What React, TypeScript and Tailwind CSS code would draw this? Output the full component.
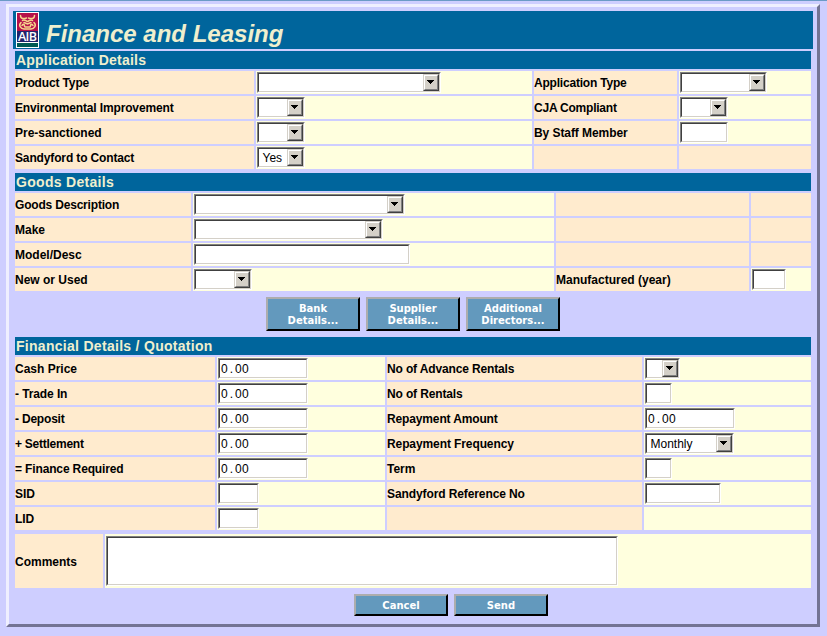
import React from "react";

const sunken =
  "box-border h-[21px] shrink-0 border border-t-[#808080] border-l-[#808080] border-r-white border-b-white bg-white";
const sunkenInner =
  "flex h-full w-full border border-t-[#404040] border-l-[#404040] border-r-[#d4d0c8] border-b-[#d4d0c8]";

function Amount({ value }: { value: string }) {
  const [whole, cents] = value.split(".");
  return (
    <span className="pl-px text-[12px] leading-[19px] tracking-[0.3px]">
      {whole}
      <span className="px-[1.7px]">.</span>
      {cents}
    </span>
  );
}

function Field({ w, value }: { w: string; value?: string }) {
  return (
    <div role="textbox" className={`${sunken} ${w}`}>
      <div className={sunkenInner}>{value && <Amount value={value} />}</div>
    </div>
  );
}

function Select({ w, value }: { w: string; value?: string }) {
  return (
    <div role="combobox" className={`${sunken} ${w}`}>
      <div className={sunkenInner}>
        <span className="min-w-0 flex-1 pl-[3.5px] text-[12px] leading-[18px]">{value}</span>
        <div className="h-[17px] w-4 shrink-0 border border-t-[#d4d0c8] border-l-[#d4d0c8] border-r-[#404040] border-b-[#404040]">
          <div className="h-full w-full border border-t-white border-l-white border-r-[#808080] border-b-[#808080] bg-[#d4d0c8] pt-1 pl-[2px]">
            <svg width="7" height="4" className="block" shapeRendering="crispEdges">
              <path d="M0 0h7v1h-1v1h-1v1h-1v1h-1v-1h-1v-1h-1v-1h-1z" fill="#000" />
            </svg>
          </div>
        </div>
      </div>
    </div>
  );
}

function Label({ children, t = "tracking-[-0.14px]" }: { children?: React.ReactNode; t?: string }) {
  return (
    <div className="flex items-center bg-[#ffebce] text-[12px] leading-[14px] font-bold whitespace-nowrap">
      <span className={t}>{children}</span>
    </div>
  );
}

function Value({ children }: { children?: React.ReactNode }) {
  return <div className="bg-[#ffffde] pt-px pl-px">{children}</div>;
}

function Bar({ children, t }: { children: string; t: string }) {
  return (
    <h2 className="h-[18px] bg-[#00659c] pl-px text-[14px] leading-[18px] font-bold whitespace-nowrap text-[#efefce]">
      <span className={t}>{children}</span>
    </h2>
  );
}

function Action({ children, h }: { children: React.ReactNode; h: string }) {
  return (
    <button
      className={`${h} w-[94px] border-2 border-t-[#adadad] border-l-[#adadad] border-r-black border-b-black bg-[#6399bd] pt-[2px] font-['DejaVu_Sans',sans-serif] text-[10px] leading-[12px] font-bold text-white`}
    >
      {children}
    </button>
  );
}

function Logo() {
  return (
    <svg width="23" height="36" viewBox="0 0 23 36" className="block shrink-0">
      <rect width="23" height="36" fill="#fff" />
      <rect x="1" y="1" width="21" height="18" fill="#b5104a" />
      <g fill="none" stroke="#f7d68c" strokeWidth="1.5" strokeLinecap="round">
        <path d="M4.500 3.500c0 3.500 3.500 3.500 6 2.500M18.500 3.500c0 3.500-3.500 3.500-6 2.500" />
        <path d="M6.500 8.500c2-2 3.500 1 5 1s3-3 5-1M8 10.500l3.500 1.500 3.500-1.500" />
        <path d="M5 10.500c-3 3 0 6.500 3 6.500h7c3 0 6-3.500 3-6.500M6 13.500c1-2 3-1 2.500 1M17 13.500c-1-2-3-1-2.500 1M9 15h5" />
      </g>
      <rect x="1" y="19" width="21" height="11" fill="#21246b" />
      <text x="11.500" y="28.700" textAnchor="middle" textLength="19" fontFamily="Open Sans" fontWeight="600" fontSize="12.500" fill="#fff">
        AIB
      </text>
      <rect x="1" y="31" width="21" height="4" fill="#005a52" />
    </svg>
  );
}

export default function App() {
  return (
    <div className="h-[636px] w-[827px] border-t border-[#6b9ac6] bg-[#ceceff] pt-[3px] pl-[6px] font-['Liberation_Sans',Arial,sans-serif] text-black">
      <div className="h-[623px] w-[814px] border-[3px] border-t-[#efefff] border-l-[#efefff] border-r-[#737394] border-b-[#737394] px-1 pt-1">
        <header className="flex h-[38px] bg-[#00659c] pt-px pl-[3px]">
          <Logo />
          <h1 className="pt-[7px] pl-[7px] text-[24px] leading-[30px] font-bold whitespace-nowrap text-[#efefce] italic">
            Finance and Leasing
          </h1>
        </header>

        <main className="px-[2px] pt-[2px]">
          <Bar t="tracking-[0.22px]">Application Details</Bar>
          <div className="mt-[2px] grid auto-rows-[23px] grid-cols-[239px_276px_143px_132px] gap-[2px]">
            <Label>Product Type</Label>
            <Value><Select w="w-[184px]" /></Value>
            <Label t="tracking-[-0.2px]">Application Type</Label>
            <Value><Select w="w-[87px]" /></Value>
            <Label>Environmental Improvement</Label>
            <Value><Select w="w-[48px]" /></Value>
            <Label t="tracking-[-0.22px]">CJA Compliant</Label>
            <Value><Select w="w-[48px]" /></Value>
            <Label t="tracking-normal">Pre-sanctioned</Label>
            <Value><Select w="w-[48px]" /></Value>
            <Label t="tracking-[-0.07px]">By Staff Member</Label>
            <Value><Field w="w-[48px]" /></Value>
            <Label>Sandyford to Contact</Label>
            <Value><Select w="w-[48px]" value="Yes" /></Value>
            <Label />
            <Label />
          </div>

          <div className="h-1" />
          <Bar t="tracking-[0.3px]">Goods Details</Bar>
          <div className="mt-[2px] grid auto-rows-[23px] grid-cols-[176px_361px_193px_60px] gap-[2px]">
            <Label t="tracking-[-0.19px]">Goods Description</Label>
            <Value><Select w="w-[211px]" /></Value>
            <Label />
            <Label />
            <Label t="tracking-normal">Make</Label>
            <Value><Select w="w-[189px]" /></Value>
            <Label />
            <Label />
            <Label t="tracking-normal">Model/Desc</Label>
            <Value><Field w="w-[216px]" /></Value>
            <Label />
            <Label />
            <Label t="tracking-normal">New or Used</Label>
            <Value><Select w="w-[58px]" /></Value>
            <Label t="tracking-normal">Manufactured (year)</Label>
            <Value><Field w="w-[34px]" /></Value>
          </div>

          <div className="flex justify-center gap-[6px] py-[6px]">
            <Action h="h-[34px]">Bank<br />Details...</Action>
            <Action h="h-[34px]">Supplier<br />Details...</Action>
            <Action h="h-[34px]">Additional<br />Directors...</Action>
          </div>

          <Bar t="tracking-[0.29px]">Financial Details / Quotation</Bar>
          <div className="mt-[2px] grid auto-rows-[23px] grid-cols-[200px_168px_255px_167px] gap-[2px]">
            <Label t="tracking-normal">Cash Price</Label>
            <Value><Field w="w-[90px]" value="0.00" /></Value>
            <Label>No of Advance Rentals</Label>
            <Value><Select w="w-[35px]" /></Value>
            <Label t="tracking-[-0.1px]">- Trade In</Label>
            <Value><Field w="w-[90px]" value="0.00" /></Value>
            <Label>No of Rentals</Label>
            <Value><Field w="w-[27px]" /></Value>
            <Label t="tracking-[-0.2px]">- Deposit</Label>
            <Value><Field w="w-[90px]" value="0.00" /></Value>
            <Label>Repayment Amount</Label>
            <Value><Field w="w-[90px]" value="0.00" /></Value>
            <Label t="tracking-[-0.25px]">+ Settlement</Label>
            <Value><Field w="w-[90px]" value="0.00" /></Value>
            <Label t="tracking-[-0.1px]">Repayment Frequency</Label>
            <Value><Select w="w-[89px]" value="Monthly" /></Value>
            <Label>= Finance Required</Label>
            <Value><Field w="w-[90px]" value="0.00" /></Value>
            <Label t="tracking-normal">Term</Label>
            <Value><Field w="w-[27px]" /></Value>
            <Label t="tracking-normal">SID</Label>
            <Value><Field w="w-[41px]" /></Value>
            <Label t="tracking-[-0.1px]">Sandyford Reference No</Label>
            <Value><Field w="w-[76px]" /></Value>
            <Label>LID</Label>
            <Value><Field w="w-[41px]" /></Value>
            <Label />
            <Value />
          </div>

          <div className="mt-1 grid h-[54px] grid-cols-[88px_706px] gap-[2px]">
            <Label t="pt-[2px] tracking-normal">Comments</Label>
            <div className="bg-[#ffffde] pt-[2px] pl-px">
              <div role="textbox" className="h-[50px] w-[512px] border border-t-[#808080] border-l-[#808080] border-r-white border-b-white bg-white">
                <div className={sunkenInner} />
              </div>
            </div>
          </div>

          <div className="flex justify-center gap-[6px] pt-[6px] pl-[76px]">
            <Action h="h-[22px]">Cancel</Action>
            <Action h="h-[22px]">Send</Action>
          </div>
        </main>
      </div>
    </div>
  );
}
